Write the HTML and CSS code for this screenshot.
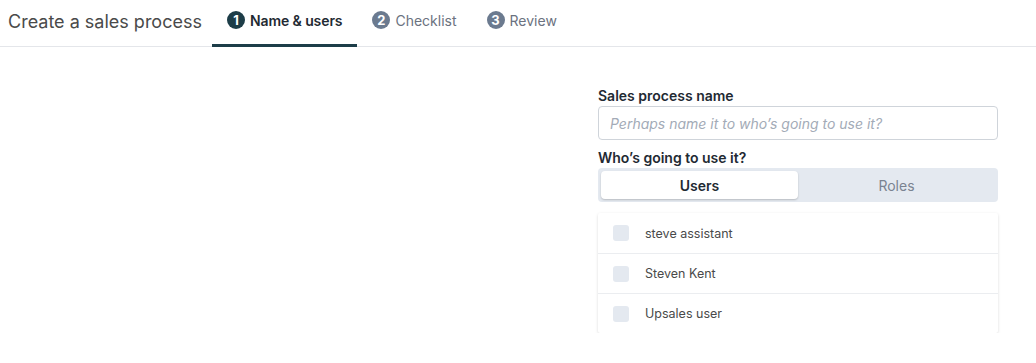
FILE: index.html
```html
<!DOCTYPE html>
<html lang="en">
<head>
  <meta charset="UTF-8" />
  <meta name="viewport" content="width=device-width, initial-scale=1.0" />
  <title>Create a sales process</title>
  <link rel="stylesheet" href="styles.css">
</head>
<body>
  <header class="topbar">
    <div class="title">Create a sales process</div>
    <nav class="steps">
      <div class="step active"><span class="num">1</span>Name &amp; users</div>
      <div class="step"><span class="num">2</span>Checklist</div>
      <div class="step"><span class="num">3</span>Review</div>
    </nav>
  </header>

  <main class="content">
    <div class="form">
      <label class="label" for="name">Sales process name</label>
      <input type="text" id="name" placeholder="Perhaps name it to who’s going to use it?" />

      <div class="label second">Who’s going to use it?</div>
      <div class="toggle">
        <button class="selected">Users</button>
        <button>Roles</button>
      </div>

      <ul class="users">
        <li><span class="check"></span>steve assistant</li>
        <li><span class="check"></span>Steven Kent</li>
        <li><span class="check"></span>Upsales user</li>
      </ul>
    </div>
  </main>
</body>
</html>
```

FILE: styles.css
```css
body {
  margin: 0;
  font-family: 'Inter', sans-serif;
  background-color: #ffffff;
  color: #333;
}
.topbar {
  display: flex;
  align-items: stretch;
  height: 46px;
  border-bottom: 1px solid #e4e6ea;
  padding-left: 8px;
}
.title {
  display: flex;
  align-items: center;
  padding-bottom: 4px;
  font-size: 18px;
  color: #4a4a4a;
  margin-right: 10px;
}
.steps {
  display: flex;
}
.step {
  display: flex;
  align-items: center;
  gap: 5px;
  padding: 0 15px 4px;
  font-size: 14px;
  color: #6b7280;
  border-bottom: 3px solid transparent;
  margin-bottom: -1px;
}
.step .num {
  display: inline-flex;
  align-items: center;
  justify-content: center;
  width: 18px;
  height: 18px;
  border-radius: 50%;
  background-color: #6b7a8f;
  color: #fff;
  font-size: 13px;
  font-weight: 700;
}
.step.active {
  color: #1f2a33;
  font-weight: 600;
  letter-spacing: -0.1px;
  border-bottom-color: #1d3d48;
}
.step.active .num {
  background-color: #1d3d48;
}
.content {
  display: flex;
  justify-content: flex-end;
  padding: 40px 38px 0 0;
}
.form {
  width: 400px;
  display: flex;
  flex-direction: column;
}
.label {
  font-size: 14px;
  font-weight: 600;
  color: #1f2a33;
  line-height: 17px;
  margin-bottom: 2px;
}
.label.second {
  margin-top: 9px;
}
input {
  height: 34px;
  box-sizing: border-box;
  border: 1px solid #cfd4da;
  border-radius: 4px;
  padding: 0 11px;
  font-family: inherit;
  font-size: 14px;
}
input::placeholder {
  color: #a3abb7;
  font-style: italic;
}
.toggle {
  display: flex;
  height: 34px;
  box-sizing: border-box;
  padding: 3px;
  background-color: #e4e9f0;
  border-radius: 4px;
}
.toggle button {
  flex: 1;
  border: none;
  background: none;
  border-radius: 4px;
  font-family: inherit;
  font-size: 14px;
  color: #7a8391;
}
.toggle button.selected {
  background-color: #fff;
  color: #1f2a33;
  font-weight: 600;
  box-shadow: 0 1px 2px rgba(0, 0, 0, 0.2);
}
.users {
  list-style: none;
  margin: 11px 0 0;
  padding: 0;
  border-radius: 2px;
  box-shadow: 0 1px 3px rgba(0, 0, 0, 0.15);
}
.users li {
  display: flex;
  align-items: center;
  gap: 16px;
  box-sizing: border-box;
  height: 40px;
  padding: 0 15px;
  font-size: 12.5px;
  color: #4a4a4a;
  border-top: 1px solid #ebedf0;
}
.users li:first-child {
  border-top: none;
}
.check {
  width: 16px;
  height: 16px;
  border-radius: 3px;
  background-color: #e4e9f0;
}
```
